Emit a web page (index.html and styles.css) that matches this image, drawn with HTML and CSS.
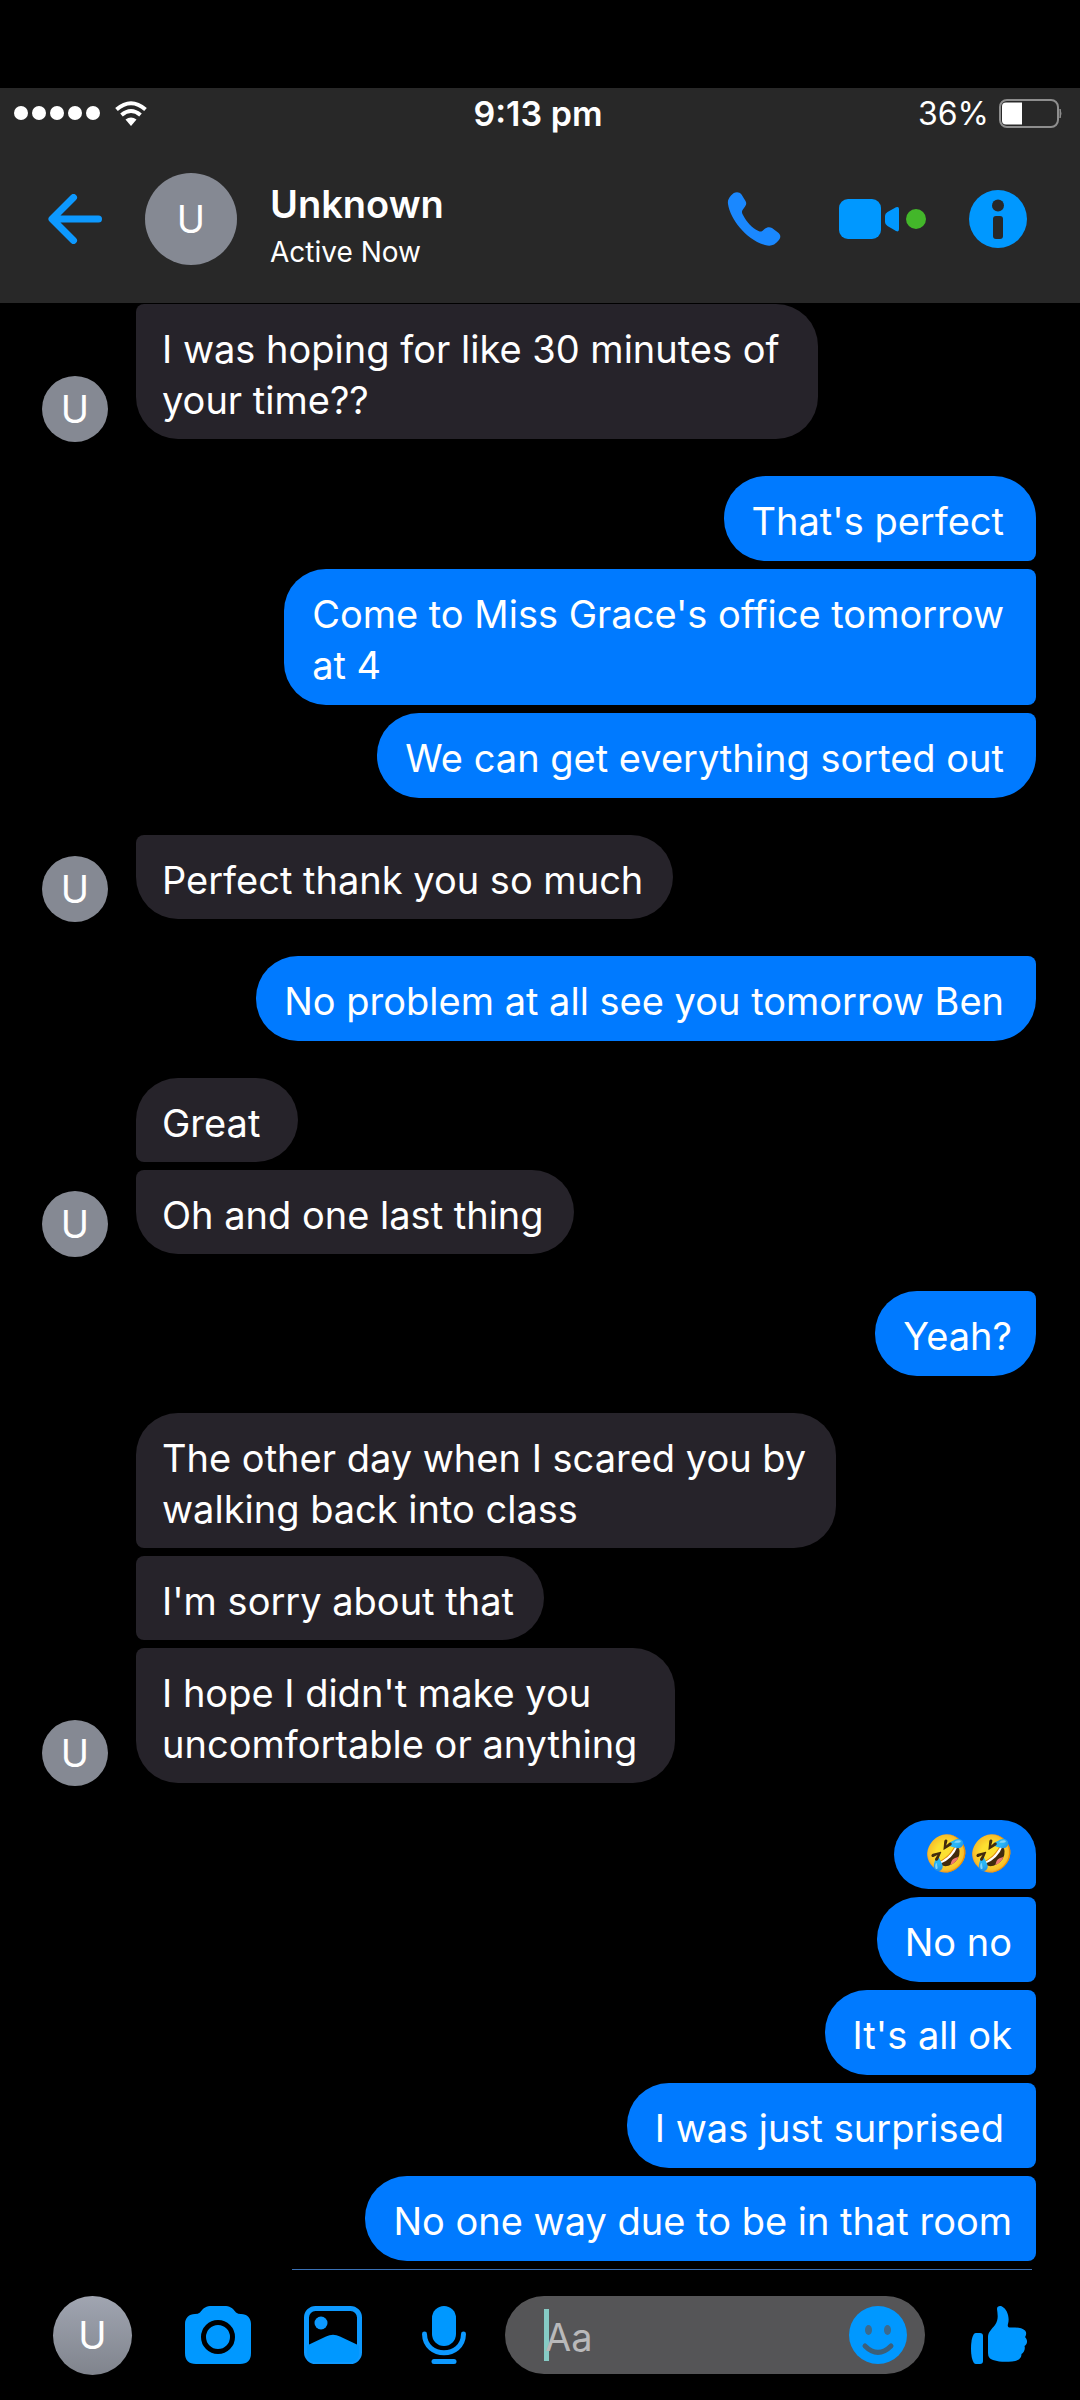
FILE: index.html
```html
<!DOCTYPE html>
<html lang="en">
<head>
<meta charset="utf-8">
<meta name="viewport" content="width=device-width, initial-scale=1">
<title>Unknown</title>
<link rel="stylesheet" href="styles.css">
</head>
<body>
<div class="app">
  <header class="top">
    <div class="status">
      <div class="status-left">
        <span class="signal" role="img" aria-label="Signal strength"><i></i><i></i><i></i><i></i><i></i></span>
        <svg class="wifi" viewBox="0 0 32 25" aria-hidden="true">
          <g fill="none" stroke="#fff" stroke-width="4"><path d="M1.5 8.5Q16-4 30.500 8.500"/><path d="M6.500 14Q16 6 25.500 14"/></g>
          <path d="M10.500 18.500Q16 14.500 21.500 18.500L16 25z" fill="#fff"/>
        </svg>
      </div>
      <time class="clock">9:13 pm</time>
      <div class="status-right">
        <span class="percent">36%</span>
        <svg class="battery" viewBox="0 0 63 29" aria-hidden="true">
          <rect x="1" y="1" width="58" height="27" rx="7" fill="none" stroke="#8e8e8e" stroke-width="2"/>
          <path d="M7 3.500H23V25.500H7Q3 25.500 3 21.500V7.500Q3 3.500 7 3.500z" fill="#fff"/>
          <path d="M61 10Q63 14.500 61 19z" fill="#8e8e8e" stroke="#8e8e8e"/>
        </svg>
      </div>
    </div>
    <div class="contact">
      <button class="icon-button back" aria-label="Back">
        <svg width="54" height="50" viewBox="0 0 54 50" fill="none" stroke="#0d99ff" stroke-width="7" stroke-linecap="round" stroke-linejoin="round"><path d="M50.500 25H5M25.500 3.500L4 25L25.500 46.500"/></svg>
      </button>
      <span class="avatar avatar-large">U</span>
      <div class="who">
        <h1 class="name">Unknown</h1>
        <p class="presence">Active Now</p>
      </div>
      <div class="actions">
        <button class="icon-button" aria-label="Voice call">
          <svg width="54" height="56" viewBox="0 0 54 56" fill="#1a88ff"><path d="M4 4.500C7 .5 12 0 14.500 3.500L18.500 10C20 12.500 19 14.500 17 17C14.500 20 14.500 21 16 24C19.500 31 25 37 31.500 40C34 41.200 35 40.500 37.500 38C40 36 42.500 35.500 45 37L51 41.500C54 44 54 46.500 51.500 49.500C47.500 54.500 43.500 55.500 38 54C19 48.500 3.500 28.500 1 13C.5 9.500 1.500 7.500 4 4.500z"/></svg>
        </button>
        <button class="icon-button video" aria-label="Video call">
          <svg width="60" height="40" viewBox="0 0 60 40" fill="#0098ff"><rect width="42" height="40" rx="9"/><path d="M48.500 13L57 8.300Q60 7 60 10V30Q60 33.500 57 32L48.500 27Q46 25.500 46 23V17Q46 14.500 48.500 13z"/></svg>
          <span class="online"></span>
        </button>
        <button class="icon-button" aria-label="Conversation information">
          <svg width="58" height="58" viewBox="0 0 58 58"><circle cx="29" cy="29" r="29" fill="#0098ff"/><circle cx="29" cy="15.500" r="6" fill="#282828"/><rect x="24" y="26" width="10" height="23" rx="3" fill="#282828"/></svg>
        </button>
      </div>
    </div>
  </header>

  <main class="chat">
    <section class="turn received">
      <span class="avatar avatar-small">U</span>
      <div class="stack"><p class="bubble follows roomy">I was hoping for like 30 minutes of<br>your time??</p></div>
    </section>
    <section class="turn sent">
      <div class="stack">
        <p class="bubble leads roomy">That's perfect</p>
        <p class="bubble follows leads roomy">Come to Miss Grace's office tomorrow<br>at 4</p>
        <p class="bubble follows roomy">We can get everything sorted out</p>
      </div>
    </section>
    <section class="turn received">
      <span class="avatar avatar-small">U</span>
      <div class="stack"><p class="bubble follows">Perfect thank you so much</p></div>
    </section>
    <section class="turn sent">
      <div class="stack"><p class="bubble follows roomy">No problem at all see you tomorrow Ben</p></div>
    </section>
    <section class="turn received">
      <span class="avatar avatar-small">U</span>
      <div class="stack">
        <p class="bubble leads roomy">Great</p>
        <p class="bubble follows">Oh and one last thing</p>
      </div>
    </section>
    <section class="turn sent">
      <div class="stack"><p class="bubble follows">Yeah?</p></div>
    </section>
    <section class="turn received">
      <span class="avatar avatar-small">U</span>
      <div class="stack">
        <p class="bubble leads">The other day when I scared you by<br>walking back into class</p>
        <p class="bubble follows leads">I'm sorry about that</p>
        <p class="bubble follows roomy">I hope I didn't make you<br>uncomfortable or anything</p>
      </div>
    </section>
    <section class="turn sent">
      <div class="stack">
        <p class="bubble leads emoji">🤣🤣</p>
        <p class="bubble follows leads">No no</p>
        <p class="bubble follows leads">It's all ok</p>
        <p class="bubble follows leads roomy">I was just surprised</p>
        <p class="bubble follows leads">No one way due to be in that room</p>
        <div class="next-edge"></div>
      </div>
    </section>
  </main>

  <form class="composer">
    <span class="avatar avatar-self">U</span>
    <button type="button" class="icon-button camera" aria-label="Camera">
      <svg width="66" height="58" viewBox="0 0 66 58"><path d="M25 0H41C46 0 49 4 51 6.500Q53 8 56 8C62 8 66 12 66 18V47Q66 58 55 58H11Q0 58 0 47V18C0 12 4 8 10 8Q13 8 15 6.500C17 4 20 0 25 0z" fill="#0098ff"/><circle cx="33" cy="31" r="14.500" fill="#0098ff" stroke="#000" stroke-width="5"/></svg>
    </button>
    <button type="button" class="icon-button" aria-label="Gallery">
      <svg width="58" height="58" viewBox="0 0 58 58"><rect x="2.500" y="2.500" width="53" height="53" rx="9" fill="none" stroke="#0d99ff" stroke-width="5"/><circle cx="17" cy="17" r="6.500" fill="#0d99ff"/><path d="M3 39.500L22 30.500Q29 27 36 30.500L55 39.500V47Q55 56 46 56H12Q3 56 3 47z" fill="#0098ff"/></svg>
    </button>
    <button type="button" class="icon-button mic" aria-label="Voice message">
      <svg width="44" height="58" viewBox="0 0 44 58"><rect x="10" width="24" height="40" rx="12" fill="#0098ff"/><g fill="none" stroke="#0d99ff" stroke-width="5" stroke-linecap="round"><path d="M2.500 28C3 53 41 53 41.500 28"/><path d="M12 55.500H32"/></g></svg>
    </button>
    <div class="field">
      <span class="caret"></span>
      <input class="entry" type="text" placeholder="Aa" aria-label="Message">
      <button type="button" class="icon-button" aria-label="Emoji">
        <svg width="58" height="58" viewBox="0 0 58 58"><circle cx="29" cy="29" r="29" fill="#0098ff"/><ellipse cx="19.500" cy="24" rx="3.500" ry="5" fill="#3d6a8c"/><ellipse cx="38.500" cy="24" rx="3.500" ry="5" fill="#3d6a8c"/><path d="M16 40Q29 53 42 40" fill="none" stroke="#3d5f78" stroke-width="5" stroke-linecap="round"/></svg>
      </button>
    </div>
    <button type="button" class="icon-button thumb" aria-label="Send a like">
      <svg width="56" height="58" viewBox="0 0 56 58" fill="#0098ff"><path d="M5 27H9Q12 27 12 30V55Q12 58 9 58H5C1.500 58 0 50 0 42.500S1.500 27 5 27z"/><path d="M26 3C26 0 29-.5 31 .5C36 3 39 11 37 18C36 21 38 22 41 21.500C47 21.500 51 22 54 24.500C56 26.500 55 29.500 54 31C57 34 56.500 38 53.500 40C54.500 43 53 46.500 50.500 48C50.500 53 46.500 55 41 55.500C34 56 28 56 22 54Q17 52.500 17 47V31C17 26 21 23 24 19C28 13 26.500 8 26 3z"/></svg>
    </button>
  </form>
</div>
</body>
</html>
```
FILE: styles.css
```css
* { box-sizing: border-box; }

body {
  margin: 0;
  background: #000;
  color: #fff;
  font-family: Inter, "Liberation Sans", sans-serif;
  font-size: 38px;
}

h1, p { margin: 0; font-weight: 400; }

.app {
  display: flex;
  flex-direction: column;
  min-height: 100vh;
  padding-top: 88px;
}

.top { background: #282828; }

.status {
  display: grid;
  grid-template-columns: 1fr auto 1fr;
  align-items: center;
  height: 50px;
  padding: 0 18px 0 14px;
}

.status-left, .status-right { display: flex; align-items: center; }
.status-left { gap: 15px; }
.status-right { justify-content: flex-end; gap: 10px; }
.signal { display: flex; gap: 4px; }
.signal i { width: 14px; height: 14px; border-radius: 50%; background: #fff; }
.wifi { width: 32px; height: 25px; }
.percent { font-size: 32px; }
.battery { width: 63px; height: 29px; }
.clock { font-size: 34px; font-weight: 600; }

.contact {
  display: flex;
  align-items: center;
  height: 165px;
  padding: 0 53px 3px 48px;
}

.icon-button {
  display: flex;
  align-items: center;
  flex: none;
  padding: 0;
  border: 0;
  background: none;
  cursor: pointer;
}

.icon-button svg { display: block; }

.avatar {
  display: flex;
  align-items: center;
  justify-content: center;
  flex: none;
  border-radius: 50%;
  background: #858993;
}

.avatar-large { width: 92px; height: 92px; margin-left: 43px; }
.avatar-small { width: 66px; height: 66px; margin-bottom: -3px; }
.avatar-self {
  width: 79px;
  height: 79px;
  background: linear-gradient(#a0a5b1, #80848d);
}

.who { flex: 1; margin-left: 33px; padding-top: 16px; }
.name { font-size: 38px; line-height: 50px; font-weight: 600; }
.presence { font-size: 28px; line-height: 46px; }

.actions { display: flex; align-items: center; }
.video { gap: 7px; margin: 0 43px 0 58px; }
.online { width: 20px; height: 20px; border-radius: 50%; background: #43b72a; }

.chat {
  display: flex;
  flex-direction: column;
  gap: 37px;
  padding: 1px 44px 0 42px;
}

.turn { display: flex; align-items: flex-end; gap: 28px; }
.sent { justify-content: flex-end; }
.stack { display: flex; flex-direction: column; align-items: flex-start; gap: 8px; }
.sent .stack { align-items: flex-end; }

.bubble {
  padding: 20px 30px 13px 26px;
  border-radius: 42px;
  background: #26232a;
  line-height: 51px;
}

.roomy { padding-right: 38px; }

.sent .bubble { padding: 20px 24px 14px 28px; background: #007aff; }
.sent .roomy { padding-right: 32px; }
.received .follows { border-top-left-radius: 8px; }
.received .leads { border-bottom-left-radius: 8px; }
.sent .follows { border-top-right-radius: 8px; }
.sent .leads { border-bottom-right-radius: 8px; }
.sent .emoji { padding: 8px 22px 10px 30px; font-size: 36px; }

.next-edge { width: 740px; height: 1px; margin-right: 4px; background: #3a70b4; }

.composer {
  display: flex;
  align-items: center;
  flex: 1;
  padding: 0 53px;
}

.camera { margin: 0 53px; }
.mic { margin: 0 39px 0 60px; }
.thumb { margin-left: 46px; }

.field {
  display: flex;
  align-items: center;
  flex: 1;
  min-width: 0;
  height: 78px;
  padding: 0 18px 0 39px;
  border-radius: 39px;
  background: #555557;
}

.caret { width: 5px; height: 52px; margin-right: -4px; background: #86cbc5; }

.entry {
  flex: 1;
  min-width: 0;
  padding: 4px 0 0;
  border: 0;
  outline: 0;
  background: none;
  color: #fff;
  font: inherit;
}

.entry::placeholder { color: #b9b9ba; opacity: 1; }
```
